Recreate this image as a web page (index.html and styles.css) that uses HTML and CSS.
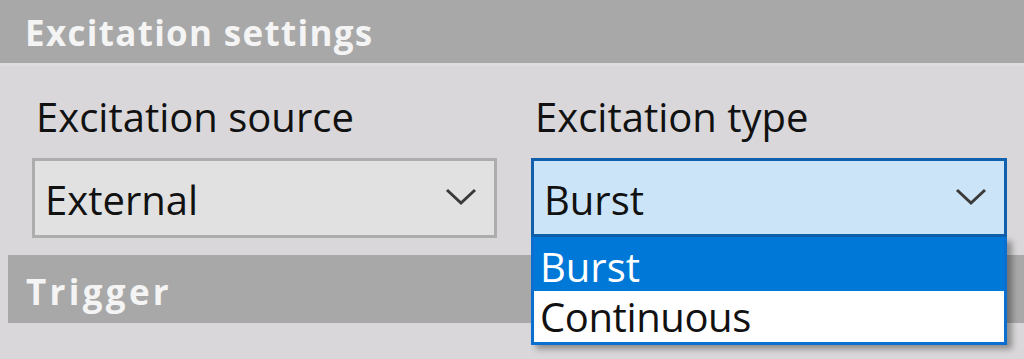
FILE: index.html
```html
<!DOCTYPE html>
<html>
<head>
<meta charset="utf-8">
<link rel="stylesheet" href="styles.css">
</head>
<body>
  <div class="section-bar top">Excitation settings</div>
  <div class="fields">
    <div class="field">
      <div class="label">Excitation source</div>
      <div class="combo">
        <span class="value">External</span>
        <svg class="chev" viewBox="0 0 32 18" width="32" height="18"><path d="M2 2 L16 15 L30 2" fill="none" stroke="#3a3a3a" stroke-width="3"/></svg>
      </div>
    </div>
    <div class="field">
      <div class="label">Excitation type</div>
      <div class="combo open">
        <span class="value">Burst</span>
        <svg class="chev" viewBox="0 0 32 18" width="32" height="18"><path d="M2 2 L16 15 L30 2" fill="none" stroke="#3a3a3a" stroke-width="3"/></svg>
        <ul class="list">
          <li class="item selected">Burst</li>
          <li class="item">Continuous</li>
        </ul>
      </div>
    </div>
  </div>
  <div class="section-bar sub">Trigger</div>
</body>
</html>
```
FILE: styles.css
```css
html, body {
  margin: 0;
  padding: 0;
}
body {
  width: 1024px;
  height: 359px;
  overflow: hidden;
  background: #d9d7d9;
  font-family: "Open Sans", "Noto Sans", sans-serif;
  color: #111;
}
.section-bar {
  background: #a8a8a8;
  color: #f4f4f4;
  font-weight: 700;
  font-size: 35px;
  letter-spacing: 1.3px;
  display: flex;
  align-items: center;
}
.section-bar.top {
  height: 63px;
  padding-left: 25px;
  padding-top: 2px;
  box-sizing: border-box;
  border-bottom: 3px solid #dedcde;
  height: 66px;
}
.section-bar.sub {
  box-sizing: border-box;
  height: 68px;
  margin-left: 8px;
  padding-left: 18px;
  padding-top: 5px;
  letter-spacing: 3.3px;
}
.fields {
  display: flex;
  gap: 34px;
  padding: 23px 0 17px 32px;
}
.field {
  display: flex;
  flex-direction: column;
  gap: 13px;
}
.field:first-child { width: 465px; }
.field:last-child { width: 476px; }
.label {
  font-size: 40px;
  line-height: 56px;
  padding-left: 4px;
}
.label.type { letter-spacing: 0.3px; }
.combo {
  position: relative;
  box-sizing: border-box;
  height: 80px;
  border: 3px solid #adadad;
  background: #e1e1e1;
  display: flex;
  align-items: center;
  justify-content: space-between;
  padding: 4px 17px 0 10px;
  font-size: 40px;
}
.combo.open {
  background: #cce4f7;
  border-color: #1160ad;
  height: 79px;
}
.value { line-height: 1; }
.chev { display: block; margin-top: -6px; }
.list {
  position: absolute;
  left: -3px;
  right: -3px;
  top: 76px;
  margin: 0;
  padding: 0;
  list-style: none;
  border: 3px solid #0a6fd0;
  border-top: 0;
  background: #fff;
  box-shadow: 5px 4px 6px rgba(0, 0, 0, 0.35);
  z-index: 2;
}
.item {
  box-sizing: border-box;
  height: 54px;
  padding-top: 6px;
  line-height: 48px;
  padding-left: 6px;
}
.item + .item { height: 51px; padding-top: 0; line-height: 51px; letter-spacing: -0.4px; }
.item.selected {
  background: #0078d7;
  color: #fff;
}
```
